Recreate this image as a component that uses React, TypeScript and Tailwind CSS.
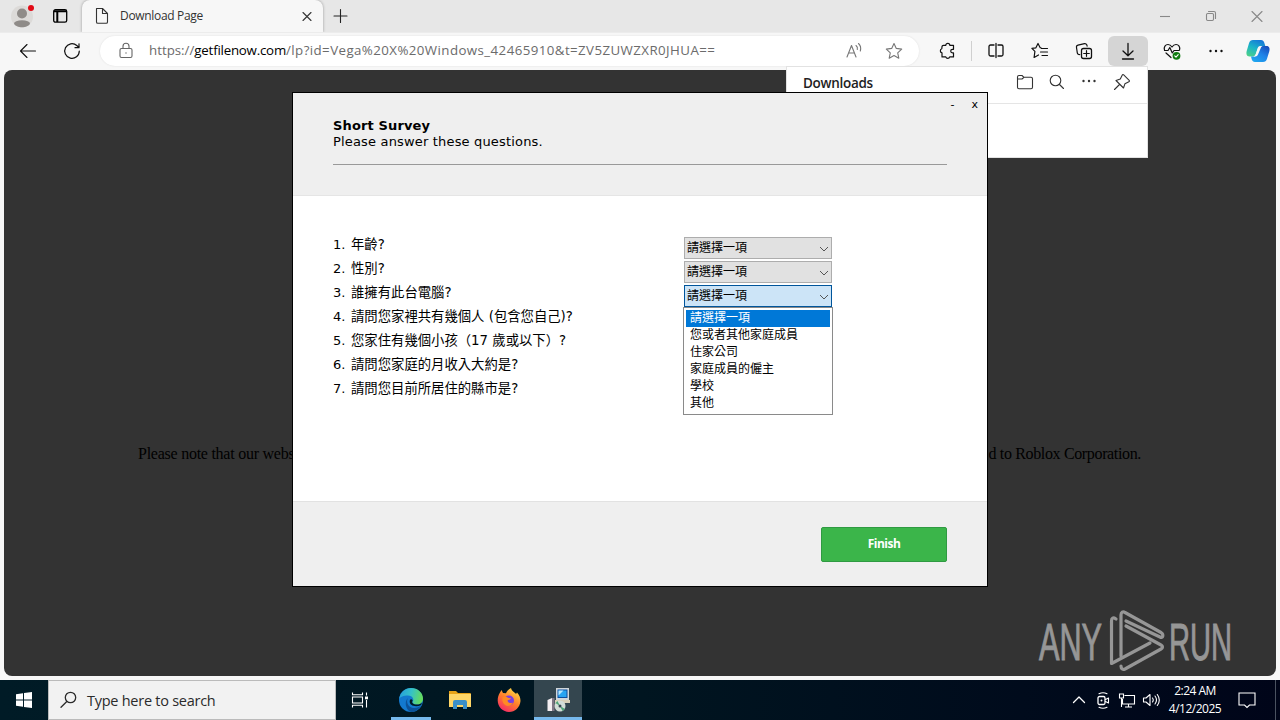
import type { ReactNode } from "react"
import clsx from "clsx"

const questions = [
  "年齡?",
  "性別?",
  "誰擁有此台電腦?",
  "請問您家裡共有幾個人 (包含您自己)?",
  "您家住有幾個小孩（17 歲或以下）?",
  "請問您家庭的月收入大約是?",
  "請問您目前所居住的縣市是?",
]

const options = ["請選擇一項", "您或者其他家庭成員", "住家公司", "家庭成員的僱主", "學校", "其他"]

function Icon({ children, className }: { children: ReactNode; className?: string }) {
  return (
    <svg
      viewBox="0 0 20 20"
      fill="none"
      stroke="currentColor"
      strokeWidth="1.1"
      strokeLinecap="round"
      strokeLinejoin="round"
      className={clsx("size-5 shrink-0", className)}
    >
      {children}
    </svg>
  )
}

function Cell({ children, className }: { children: ReactNode; className?: string }) {
  return <div className={clsx("flex h-[30px] w-10 shrink-0 items-center justify-center", className)}>{children}</div>
}

function Dots({ className }: { className?: string }) {
  return (
    <Icon className={className}>
      <g fill="currentColor" stroke="none">
        <circle cx="4.5" cy="10" r="1.2" />
        <circle cx="10" cy="10" r="1.2" />
        <circle cx="15.5" cy="10" r="1.2" />
      </g>
    </Icon>
  )
}

function TabBar() {
  return (
    <div className="flex h-8 bg-[#e7e7e7]">
      <div className="flex w-[82px] shrink-0 items-center">
        <svg viewBox="0 0 28 28" className="ml-2 size-7">
          <circle cx="14" cy="14.500" r="11" fill="#dcdad8" />
          <circle cx="14" cy="11.500" r="5" fill="#8f8b88" />
          <path d="M6 21.500a8 3.300 0 0 1 16 0c-2 5-14 5-16 0Z" fill="#8f8b88" />
          <circle cx="23" cy="6" r="3" fill="#e20a16" />
        </svg>
        <Icon className="ml-3.5 text-black">
          <rect x="3.700" y="3.700" width="13" height="12.500" rx="1.800" strokeWidth="1.300" />
          <path d="M4 5.300h12.500M7.300 6v10" strokeWidth="2" strokeLinecap="butt" />
        </Icon>
      </div>
      <div className="flex w-[241px] shrink-0 items-center rounded-t-lg bg-[#f7f7f7] shadow-[0_0_3px_rgba(0,0,0,0.35)] [clip-path:inset(-3px_-3px_0_-3px)]">
        <Icon className="ml-2.5 text-[#333]">
          <path d="M4.500 2.500h6l5 5v8.500a1.300 1.300 0 0 1-1.300 1.300H5.800A1.300 1.300 0 0 1 4.500 16ZM10.500 2.500v5h5" />
        </Icon>
        <span className="ml-2 w-[180px] text-[12px] tracking-[-0.32px] text-[#333]">Download Page</span>
        <Icon className="ml-[-3px] text-[#333]">
          <path d="m6 6.500 8 8M14 6.500l-8 8" />
        </Icon>
      </div>
      <Icon className="ml-[7px] mt-[6px] text-[#222]">
        <path d="M10.500 3.500v13M4 10h13" />
      </Icon>
      <div className="ml-auto flex items-center text-[#888]">
        <div className="flex w-[46px] justify-center">
          <Icon><path d="M5 10.500h10" strokeLinecap="butt" /></Icon>
        </div>
        <div className="flex w-[46px] justify-center">
          <Icon>
            <rect x="5.500" y="7.500" width="7" height="7" rx="1.200" />
            <path d="M7.500 5.500h5.500a1.500 1.500 0 0 1 1.500 1.500v5.500" />
          </Icon>
        </div>
        <div className="flex w-[46px] justify-center">
          <Icon><path d="m5 5.500 10 10M15 5.500l-10 10" /></Icon>
        </div>
      </div>
    </div>
  )
}

function Toolbar() {
  return (
    <div className="flex h-[38px] items-center border-t border-[#ececec] bg-[#f7f7f7] pb-px text-[#111]">
      <Cell className="ml-2">
        <Icon><path d="M17.500 10H2.500M9 3.500 2.500 10 9 16.500" /></Icon>
      </Cell>
      <Cell className="ml-1">
        <Icon>
          <path d="M17.300 10A7.300 7.300 0 1 1 14.800 4.500L17 6.500M17 2.800v3.900h-4" strokeWidth="1.200" />
        </Icon>
      </Cell>
      <div className="ml-2 flex h-[30px] w-[819px] shrink-0 items-center rounded-full bg-white pl-4 shadow-[0_0_2px_#ddd]">
        <Icon className="text-[#666]">
          <rect x="4" y="7.500" width="12" height="9" rx="1.500" />
          <path d="M7 7.500V5.300a3 3 0 0 1 6 0v2.200" />
          <circle cx="10" cy="12" r="0.700" fill="currentColor" stroke="none" />
        </Icon>
        <span className="ml-[13px] w-[685px] whitespace-nowrap text-[13.300px] text-[#6b6b6b]">
          <span className="tracking-[0px]">https://</span>
          <span className="tracking-[-0.22px] text-black">getfilenow.com</span>
          <span className="tracking-[0.42px]">/lp?id=Vega%20X%20Windows_42465910&t=ZV5ZUWZXR0JHUA==</span>
        </span>
        <Cell className="text-[#777]">
          <Icon>
            <path d="M3 16 7.500 4.500 12 16M4.500 12h6M12 4.500c1.300 1 1.700 2.500 1.300 4M14.500 2.500c2 1.800 2.600 4.600 1.800 7.500" />
          </Icon>
        </Cell>
        <Cell className="text-[#777]">
          <Icon>
            <path d="m10 2.500 2.300 4.900 5.400.7-4 3.700 1.100 5.400L10 14.500l-4.800 2.700 1.100-5.400-4-3.700 5.400-.7Z" />
          </Icon>
        </Cell>
      </div>
      <Cell className="ml-[9px]">
        <Icon>
          <path
            d="M5.500 4.300h2.300a2 2 0 0 1 4 0h3.700v4h-1a1.700 1.700 0 0 0 0 3.600h1v4h-3.800a2 2 0 0 1-3.900 0H4v-4a2.200 2.200 0 0 1-.2-4.200L4 5.800a1.500 1.500 0 0 1 1.500-1.500Z"
            strokeWidth="1.200"
          />
        </Icon>
      </Cell>
      <div className="ml-[3px] h-5 w-px bg-[#d0d0d0]" />
      <Cell className="ml-1">
        <Icon>
          <path d="M8 4H4.500A1.500 1.500 0 0 0 3 5.500v8A1.500 1.500 0 0 0 4.500 15H8M12 4h3.500A1.500 1.500 0 0 1 17 5.500v8a1.500 1.500 0 0 1-1.500 1.500H12M10 2.500v14" strokeWidth="1.300" />
        </Icon>
      </Cell>
      <Cell className="ml-1">
        <Icon>
          <path d="m11 6.800-.8-.1L8 2.500 5.900 6.800l-4 .6 3 3-.8 6.100L8.500 14M11.500 7.500h6M10.500 11h7M12 14.500h5.500" strokeWidth="1.200" />
        </Icon>
      </Cell>
      <Cell className="ml-1">
        <Icon>
          <rect x="7.500" y="7.500" width="10" height="10" rx="2" strokeWidth="1.300" />
          <path d="M12.500 9.700v5.600M9.700 12.500h5.600M5.800 13.500a2 2 0 0 1-2.500-1.600L2.500 6.500A2 2 0 0 1 4 4.200l6.500-1.500a2 2 0 0 1 2.400 1.500l.2.900" strokeWidth="1.200" />
        </Icon>
      </Cell>
      <Cell className="ml-1 rounded-md bg-[#d5d5d5]">
        <Icon>
          <path d="M10 2.500v12M5 10l5 4.700 5-4.700M4.500 18h11" strokeWidth="1.300" />
        </Icon>
      </Cell>
      <Cell className="ml-1">
        <Icon>
          <path d="M2.500 9C1.500 6 3.500 3.500 6 3.500c2 0 3.200 1.300 4 2.500.8-1.200 2-2.500 4-2.500 2.500 0 4.500 2.500 3.500 5.500M2.500 9.500H6l1.800-3 2.500 5.500 1.700-2.500h5M4 12l5 4.500" strokeWidth="1.200" />
          <circle cx="14.500" cy="14.800" r="3.900" fill="#107c10" stroke="none" />
          <path d="m12.700 14.900 1.300 1.200 2.200-2.400" stroke="white" />
        </Icon>
      </Cell>
      <Cell className="ml-1">
        <Dots />
      </Cell>
      <Cell className="ml-0.5">
        <svg viewBox="0 0 24 24" className="size-6">
          <defs>
            <linearGradient id="cpA" x1="0.700" y1="0" x2="0.200" y2="1">
              <stop offset="0" stopColor="#1677d8" />
              <stop offset="0.500" stopColor="#1bb4c8" />
              <stop offset="1" stopColor="#4bd08a" />
            </linearGradient>
            <linearGradient id="cpB" x1="0.900" y1="0" x2="0.200" y2="1">
              <stop offset="0" stopColor="#1649b8" />
              <stop offset="0.500" stopColor="#1f83e8" />
              <stop offset="1" stopColor="#20a7ef" />
            </linearGradient>
          </defs>
          <path d="M7 1h8c2 0 3 1.500 3.500 3.500l.8 2.500H15c-2 0-2.700 1-3.200 2.600l-1.700 5c-.6 1.800-1.500 2.900-3.600 2.900H3.500C.5 17.500 0 14.500.7 12L3 4.300C3.700 2 5 1 7 1Z" fill="url(#cpA)" />
          <path d="M17 23H9c-2 0-3-1.500-3.500-3.500L5 17.500h2.500c2 0 2.700-1 3.200-2.600l2-5.300C13.300 7.800 14 7 16 7h4.500c3 0 3.500 2.800 2.800 5.200L21 19.700c-.7 2.300-2 3.300-4 3.300Z" fill="url(#cpB)" />
          <path d="M15 8.500 12 15.500c-.5 1.300-1.200 2-2.700 2H7.500c1.300-.4 1.800-1.300 2.200-2.500l1.700-5c.5-2 1.400-3 3.400-3h2.700c-1.500 0-2 .5-2.500 1.500Z" fill="#f7f7f7" />
        </svg>
      </Cell>
    </div>
  )
}

function DownloadsFlyout() {
  return (
    <div className="absolute top-[66px] left-[786px] h-[92px] w-[362px] border border-[#e2e2e2] bg-white">
      <div className="flex h-[37px] items-center border-b border-[#e5e5e5] pl-4 text-[#222]">
        <span className="mb-1 w-[212px] text-[13.500px] font-semibold tracking-[-0.3px]">Downloads</span>
        <div className="mb-1.5 flex gap-3 text-[#333]">
          <Icon>
            <path d="M2.500 5A1.500 1.500 0 0 1 4 3.500h3L9 5.300h7A1.500 1.500 0 0 1 17.500 6.800v8.400a1.500 1.500 0 0 1-1.500 1.500H4a1.500 1.500 0 0 1-1.500-1.500ZM2.500 7H7l2-1.700" />
          </Icon>
          <Icon>
            <circle cx="8.500" cy="8.500" r="5.300" />
            <path d="m12.500 12.500 4 4" />
          </Icon>
          <Dots className="mt-[-1px]" />
          <Icon className="ml-px">
            <path d="m11.700 2.800 5.500 5.500c.5.500.3 1.200-.3 1.500l-4 2-1.400 4.200-7.500-7.500L8.300 7l2-4c.3-.6 1-.6 1.400-.2ZM7.500 12.500l-5 5" />
          </Icon>
        </div>
      </div>
    </div>
  )
}

function Select({ open }: { open?: boolean }) {
  return (
    <div
      className={clsx(
        "flex h-[22px] w-[148px] items-center justify-between border pl-0.5 pr-0.5 text-[12px]",
        open ? "border-[#00559b] bg-[#cce4f7]" : "border-[#adadad] bg-[#e1e1e1]",
      )}
    >
      <span className="mb-0.5 leading-4">請選擇一項</span>
      <svg viewBox="0 0 10 10" className="mt-px size-2.5" fill="none" stroke="#555">
        <path d="m1 3 4 4 4-4" />
      </svg>
    </div>
  )
}

function SurveyDialog() {
  return (
    <div className="absolute top-[92px] left-[292px] flex h-[495px] w-[696px] flex-col border border-black bg-white font-['DejaVu_Sans','Noto_Sans_CJK_TC',sans-serif] text-[13px] text-black">
      <div className="h-[103px] border-b border-[#e5e5e5] bg-[#efefef]">
        <div className="flex h-[25px] items-center justify-end gap-[17px] pr-[9px] font-['DejaVu_Sans',sans-serif] text-[11px]">
          <span>-</span>
          <span>x</span>
        </div>
        <div className="mx-10 h-[47px] border-b border-[#999] leading-4">
          <p className="font-['DejaVu_Sans',sans-serif] font-bold tracking-[0.14px]">Short Survey</p>
          <p className="tracking-[0.17px]">Please answer these questions.</p>
        </div>
      </div>
      <div className="flex flex-1 pl-10 pt-[37px]">
        <ol className="w-[350px] leading-6">
          {questions.map((q, i) => (
            <li key={q} className="flex h-6 items-center whitespace-nowrap">
              <span className="w-[18px]">{i + 1}.</span>
              <span className="text-[13.350px]">{q}</span>
            </li>
          ))}
        </ol>
        <div className="flex flex-col gap-0.5 pt-1 pl-px font-['Noto_Sans_CJK_TC',sans-serif]">
          <Select />
          <Select />
          <div className="relative">
            <Select open />
            <ul className="absolute top-[22px] left-[-1px] h-[108px] w-[150px] border border-[#8a8a8a] bg-white px-0.5 pt-0.5 text-[12px]">
              {options.map((o, i) => (
                <li key={o} className={clsx("h-[17px] pl-1 leading-[14px]", i === 0 && "bg-[#0078d7] text-white")}>
                  {o}
                </li>
              ))}
            </ul>
          </div>
        </div>
      </div>
      <div className="flex h-[85px] justify-end border-t border-[#e2e2e2] bg-[#efefef] pt-[25px] pr-10">
        <button className="h-[35px] w-[126px] rounded-[2px] border border-[#2f9a42] bg-[#3bb54a] pb-0.5 font-['Open_Sans',sans-serif] text-[12px] font-bold tracking-[-0.5px] text-white">
          Finish
        </button>
      </div>
    </div>
  )
}

function Watermark() {
  return (
    <svg viewBox="0 0 194 64" className="absolute top-[608px] left-[1038px] h-16 w-[194px]">
      <g fill="#969696" stroke="#969696" strokeWidth="1" fontFamily="Liberation Sans" fontSize="52">
        <text transform="translate(1 52) scale(.59 1)">ANY</text>
        <text transform="translate(131 52) scale(.56 1)">RUN</text>
      </g>
      <g fill="none" stroke="#969696" strokeWidth="3.200" strokeLinecap="round" strokeLinejoin="round">
        <path d="M78 11c-3-2-4.500-1-4.500 2v42.500L112 35" />
        <path d="M83 48V7c0-3 2-4 4-2.500l36 20c3 2 2 6-1 4.500L88 13" />
        <path d="m88 18 35 19c2 1 2 3 0 4L87 61c-2 1-4 0-4-3" />
      </g>
    </svg>
  )
}

function TaskButton({ children, className }: { children: ReactNode; className?: string }) {
  return <div className={clsx("flex h-10 w-12 shrink-0 items-center justify-center", className)}>{children}</div>
}

function Taskbar() {
  return (
    <div className="flex h-10 bg-linear-to-r from-[#001b26] via-[#001520] to-[#000519] text-white">
      <TaskButton>
        <svg viewBox="0 0 16 16" className="size-4" fill="white">
          <path d="M0 2.300 7 1.300v6.200H0ZM8 1.100 16 0v7.500H8ZM0 8.500h7v6.200l-7-1ZM8 8.500h8V16l-8-1.100Z" />
        </svg>
      </TaskButton>
      <div className="flex w-72 items-center border border-[#bbb] bg-[#f2f2f2] text-[#2b2b2b]">
        <Icon className="ml-2.5">
          <circle cx="11.500" cy="7.500" r="5.200" strokeWidth="1.300" />
          <path d="M7.800 11.500 2 17.300" strokeWidth="1.300" />
        </Icon>
        <span className="ml-2 mt-0.5 text-[14.500px] tracking-[-0.26px]">Type here to search</span>
      </div>
      <TaskButton>
        <svg viewBox="0 0 18 18" className="size-[18px]" fill="none" stroke="white" strokeWidth="1.100">
          <path d="M1.500 1.500v2.300h10V1.500M1.500 6h10v6h-10ZM1.500 16.500v-2.300h10v2.300M15.500 1.500v3M15.500 9v7.500" />
          <path d="M14 5.500h3v2.800h-3Z" fill="white" stroke="none" />
        </svg>
      </TaskButton>
      <TaskButton className="relative ml-[3px]">
        <svg viewBox="0 0 24 24" className="size-6">
          <defs>
            <linearGradient id="edA" x1="0" y1="0.200" x2="1" y2="0.400">
              <stop offset="0" stopColor="#259edc" />
              <stop offset="0.500" stopColor="#35c1c8" />
              <stop offset="1" stopColor="#66dc5b" />
            </linearGradient>
          </defs>
          <circle cx="12" cy="12" r="12" fill="#1379cf" />
          <path d="M.2 11C1 4.500 6 0 12 0c7 0 12 5 12 10.500 0 4-3 6-6 6-3.500 0-5-1.500-4.300-2.700 1.600-2 .3-6.300-4.700-6.300C4.500 7.500 1 9 .2 11Z" fill="url(#edA)" />
          <path d="M9 10c-2.500 4 .5 10 6 10 3.500 0 5.500-1.300 7-2.500C20 21.500 16.500 24 12 24 6.500 22 5 13 9 10Z" fill="#0c5299" />
          <path d="M13.700 12.500c-1.500 2 .3 4 4.300 4 2 0 3.800-.6 5-2l-.8 2.500c-5 2.500-12 1-11.500-4 .3-2 2-2.500 3-.5Z" fill="#001b26" />
        </svg>
        <div className="absolute bottom-0 h-[3px] w-10 bg-[#76b9ed]" />
      </TaskButton>
      <TaskButton className="ml-px">
        <svg viewBox="0 0 22 20" className="h-5 w-[22px]">
          <path d="M0 1h7l2 2h12a1 1 0 0 1 1 1v13H0Z" fill="#e8a317" />
          <path d="M0 4h22v13H0Z" fill="#ffd667" />
          <path d="M4 19v-7a2 2 0 0 1 2-2h10a2 2 0 0 1 2 2v7h-4v-4H8v4Z" fill="#3a8fc9" />
        </svg>
      </TaskButton>
      <TaskButton className="ml-px">
        <svg viewBox="0 0 24 24" className="size-6">
          <defs>
            <linearGradient id="ffA" x1="0.800" y1="0" x2="0.200" y2="1">
              <stop offset="0" stopColor="#ffe047" />
              <stop offset="0.500" stopColor="#ff7e2b" />
              <stop offset="1" stopColor="#f5226c" />
            </linearGradient>
          </defs>
          <path d="M3 4.500 4.500 2l1.500 3 3 .2C10 3 12 1 14 0c.5 3 3.500 4 5 6l1-1.500c2.500 2.500 3.500 5.500 3.500 8.500C23 19.500 18 24 12 24S.7 19 .7 12.500C.7 9.500 1.500 6.500 3 4.500Z" fill="url(#ffA)" />
          <circle cx="12" cy="12.500" r="5" fill="#7a3fe0" />
          <path d="M5.500 9.500c2-1.500 4-1 6 .5l2.500.2c-.5 1.300-2 1.600-3.500 2.300 0 2 3 3.500 5.500 2-1.500 4-6.500 4.500-9 1.500-1.500-1.800-2-4-1.500-6.500Z" fill="#ff8a24" />
        </svg>
      </TaskButton>
      <TaskButton className="relative ml-px bg-[#34464f]">
        <svg viewBox="0 0 24 24" className="size-6">
          <path d="M10 0h13v12H10Z" fill="#cfd6da" />
          <path d="M11.500 1.500h10v8.500h-10Z" fill="#0c4fa0" />
          <path d="M12.500 2.500h8v6.500h-8Z" fill="#27a4f2" />
          <path d="M12.500 2.500h5l-5 5Z" fill="#b4e6ff" />
          <path d="M9 12h15v3H9Z" fill="#d8d0b8" />
          <path d="M1.500 12 6 10v13H1.500Z" fill="#f3eef1" />
          <path d="M6 10h2.500v13H6Z" fill="#7f7786" />
          <circle cx="14" cy="18" r="5.500" fill="#d3ddd8" />
          <path d="m14 18-4.500-3 2-2ZM14 18l5 3-2.500 2Z" fill="#4fa577" />
          <circle cx="14" cy="18" r="1.500" fill="#34464f" />
        </svg>
        <div className="absolute bottom-0 h-[3px] w-12 bg-[#76b9ed]" />
      </TaskButton>
      <div className="ml-auto flex items-center gap-1 pr-[4px]">
        <Icon><path d="m4.500 12.500 5.500-5.500 5.500 5.500" strokeWidth="1.300" /></Icon>
        <Icon>
          <rect x="5" y="6.500" width="7" height="8" rx="1.500" strokeWidth="1.300" />
          <path d="m12.500 9.500 3-1.500v5l-3-1.500M6 3.800q4-2 8 0M6 17.200q4 2 8 0" />
          <circle cx="8.500" cy="10.500" r="1" fill="white" stroke="none" />
        </Icon>
        <Icon>
          <path d="M7.500 5.500h10v8.500H5.500V9M11.500 14v3M8 17h7M2.500 4h4v4h-4ZM4.500 8v9" strokeLinecap="butt" strokeLinejoin="miter" />
        </Icon>
        <Icon>
          <path d="M2.500 8h2.500l4-3.500v11L5 12H2.500ZM11.500 8q1.500 2 0 4M14 6q3 4 0 8M16.300 4.500q4 5.500 0 11" />
        </Icon>
        <div className="w-[60px] text-center text-[12px] leading-[18px] tracking-[-0.5px] whitespace-nowrap">
          <p>2:24 AM</p>
          <p>4/12/2025</p>
        </div>
        <Icon className="ml-[8px]">
          <path d="M2 3h16v12h-5.500L10 17.500 7.500 15H2Z" strokeLinejoin="miter" />
        </Icon>
        <div className="ml-[14px] h-10 w-px bg-[#4a5260]" />
      </div>
    </div>
  )
}

export default function App() {
  return (
    <div className="relative flex h-[720px] w-[1280px] flex-col overflow-hidden bg-[#f7f7f7] font-['Open_Sans',sans-serif]">
      <TabBar />
      <Toolbar />
      <main className="mx-1 mb-1 flex flex-1 items-center justify-between rounded-lg bg-[#333] pl-[134px] pr-[135px] pt-[161px] font-['Liberation_Serif',serif] text-[16px] text-black">
        <span className="whitespace-nowrap tracking-[-0.25px]">Please note that our webs</span>
        <span className="whitespace-nowrap tracking-[-0.35px]">d to Roblox Corporation.</span>
      </main>
      <Taskbar />
      <Watermark />
      <DownloadsFlyout />
      <SurveyDialog />
    </div>
  )
}
